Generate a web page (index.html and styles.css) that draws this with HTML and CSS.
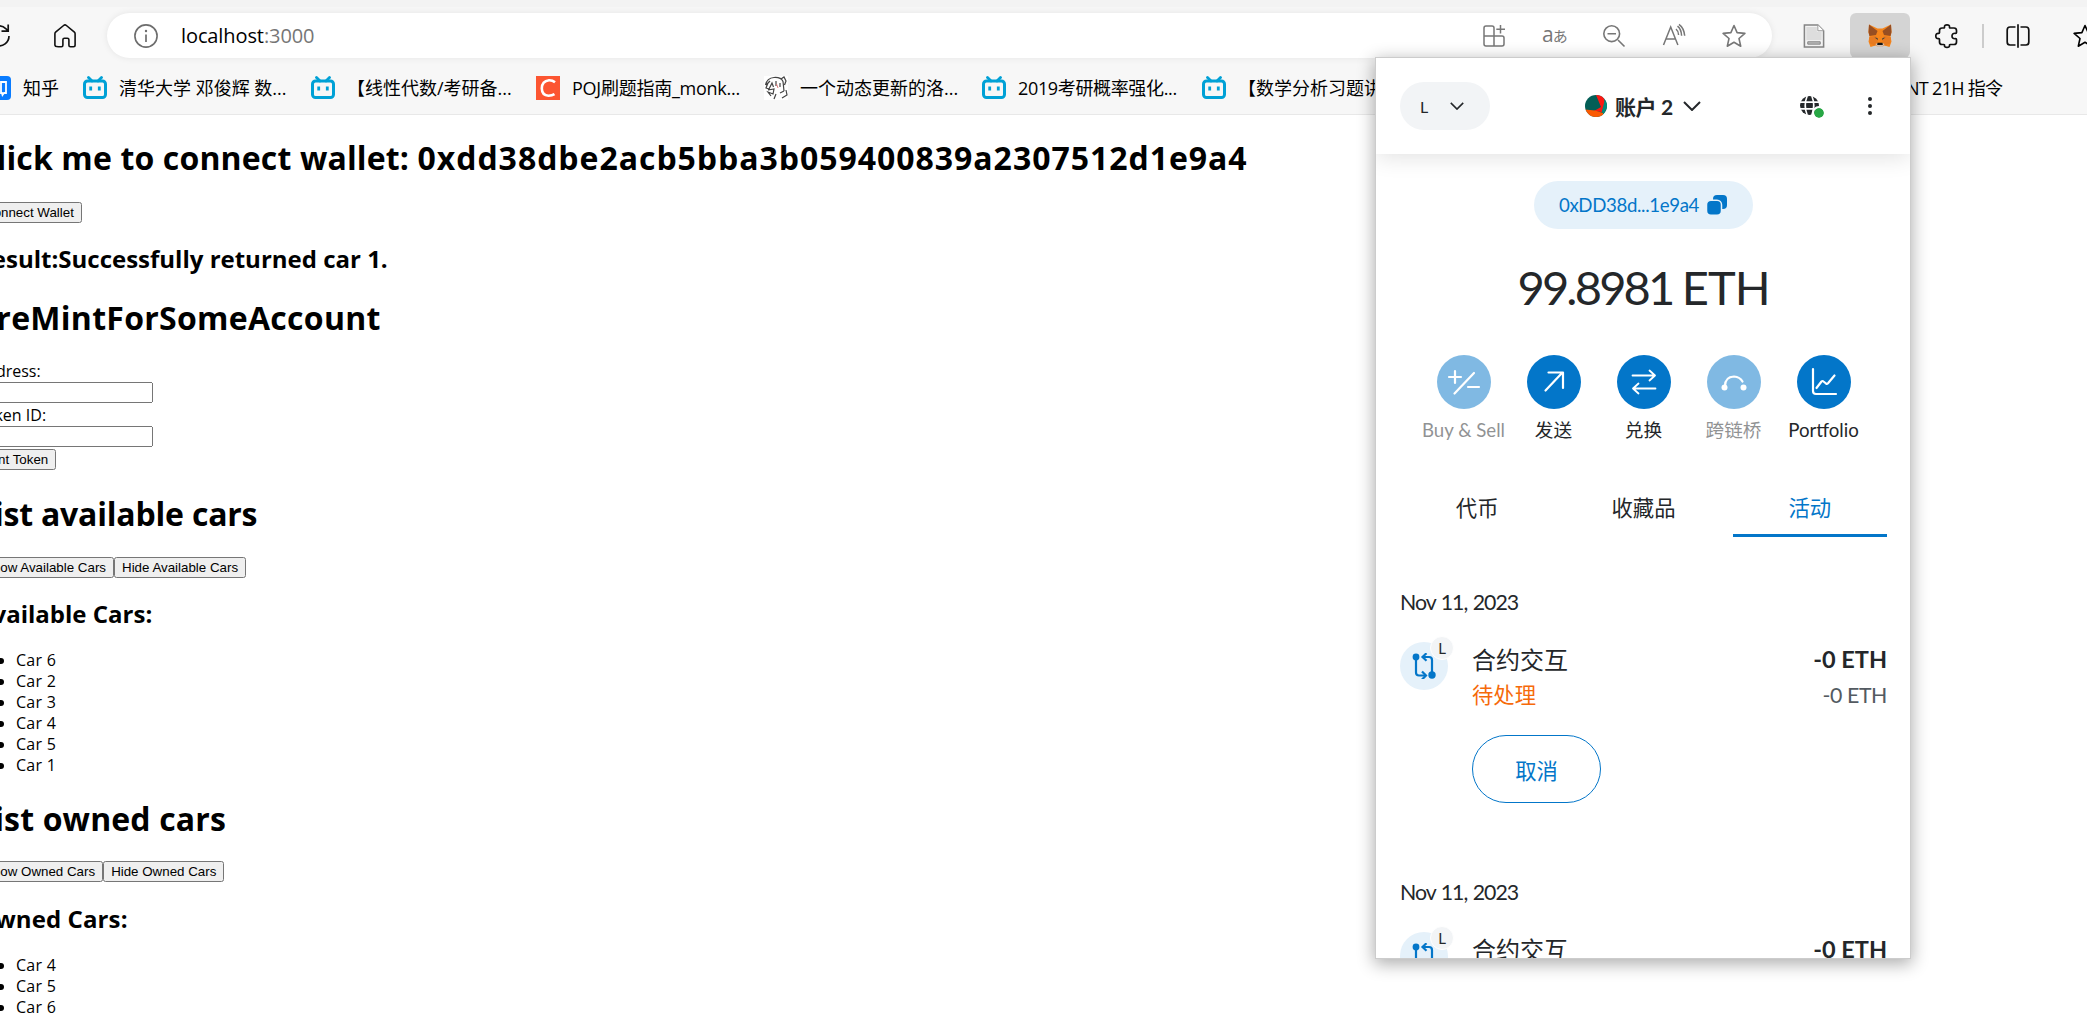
FILE: index.html
```html
<!DOCTYPE html>
<html lang="zh-CN">
<head>
<meta charset="utf-8">
<title>localhost:3000</title>
<link rel="stylesheet" href="styles.css">
</head>
<body>
<svg class="defs" aria-hidden="true">
  <symbol id="tv" viewBox="0 0 24 24"><path d="M5.500 1.500 9 5M18.500 1.500 15 5" stroke="#00a1d6" stroke-width="2.800" stroke-linecap="round"/><rect x="1.500" y="5" width="21" height="16.500" rx="3" fill="none" stroke="#00a1d6" stroke-width="3"/><path d="M7.700 10.500v4M16.300 10.500v4" stroke="#00a1d6" stroke-width="2.800"/></symbol>
  <symbol id="star" viewBox="0 0 24 24"><path d="m12 1.500 3.100 7.100 7.800.8-5.900 5.100 1.700 7.700L12 18.300l-6.700 3.900L7 14.500 1.100 9.400l7.800-.8Z" fill="none" stroke="currentColor" stroke-width="1.600" stroke-linejoin="round"/></symbol>
  <symbol id="chevron" viewBox="0 0 18 10"><path d="m1 1 8 8 8-8" fill="none" stroke="currentColor" stroke-width="2"/></symbol>
  <symbol id="swap-nodes" viewBox="0 0 24 26"><g fill="none" stroke="#0376c9" stroke-width="2.200"><path d="M4 4v15.500q0 3 3 3h6.500M20 22V7q0-3-3-3h-6"/><path d="m10 18.500 4 4-4 4M14.500.200l-4 3.800 4 3.800"/></g><circle cx="4" cy="4" r="3.400" fill="#0376c9"/><circle cx="20" cy="22" r="3.700" fill="#0376c9"/></symbol>
</svg>

<header class="browser">
  <div class="toolbar">
    <svg class="icon reload" viewBox="0 0 24 24"><path d="M22 12A10 10 0 1 1 19 4.800L21 7M21.200 .500V7.200H14.500" fill="none" stroke="#111" stroke-width="1.700"/></svg>
    <svg class="icon home" viewBox="0 0 24 24"><path d="M1.900 9.800q0-1 .7-1.600l8-6.700q1.400-1.200 2.800 0l8 6.700q.7.600.7 1.600V21q0 1.700-1.700 1.700h-3q-1.500 0-1.500-1.500v-5.500q0-1.500-1.500-1.500h-3q-1.500 0-1.500 1.500v5.500q0 1.500-1.500 1.500h-3Q1.900 22.700 1.900 21Z" fill="none" stroke="#111" stroke-width="1.600"/></svg>
    <div class="address-bar">
      <svg class="icon info" viewBox="0 0 24 24"><circle cx="12" cy="12" r="11.100" fill="none" stroke="#6d6d6d" stroke-width="1.600"/><path d="M12 10.500v7.500" stroke="#6d6d6d" stroke-width="1.700"/><circle cx="12" cy="7" r="1.200" fill="#6d6d6d"/></svg>
      <span class="url">localhost<span class="port">:3000</span></span>
      <div class="address-actions">
        <svg class="icon" viewBox="0 0 24 24"><path d="M12 12V4q0-2-2-2H4Q2 2 2 4v16q0 2 2 2h16q2 0 2-2v-6q0-2-2-2H2M12 12v10M18.500 1v8.500M14.300 5.200H23" fill="none" stroke="#777" stroke-width="1.500"/></svg>
        <span class="translate"><span>a</span><span class="kana">あ</span></span>
        <svg class="icon" viewBox="0 0 24 24"><path d="M16 16l6.500 6.500M5.500 9.700h8.500" stroke="#777" stroke-width="1.600"/><circle cx="9.700" cy="9.700" r="7.900" fill="none" stroke="#777" stroke-width="1.600"/></svg>
        <svg class="icon" viewBox="0 0 24 24"><path d="m1.500 21 7.200-18 7.200 18M4 15h9.300M14 5q2.500 2 2.600 6M15.500 2.200q3.800 3 4.100 9.500M17 .300q5 3.500 5.700 11.500" fill="none" stroke="#777" stroke-width="1.500"/></svg>
        <svg class="icon grey"><use href="#star"/></svg>
      </div>
    </div>
    <svg class="icon doc" viewBox="0 0 24 25"><path d="M2 1h14l6 6v17H2Z" fill="#f4f4f4" stroke="#858585" stroke-width="1.600"/><path d="M4 3h11v5h5v9H4Z" fill="#ddd"/><path d="M16 1v6h6" fill="#fff" stroke="#999"/><path d="M5.500 18.500h13v2.500h-13Z" fill="#bbb" stroke="#858585"/></svg>
    <div class="fox-tab">
      <svg class="fox" viewBox="0 0 24 24"><path d="M1 .5 9.500 4.500h5L23 .5l.5 8-1 4 1 5-2 5.500-5-1.500-3 1.500h-3l-3-1.500-5 1.500-2-5.500 1-5-1-4Z" fill="#f6851b"/><path d="M1 .5 9.500 7 8 11l-6.500 1L.500 8ZM23 .5 14.500 7 16 11l6.500 1 1-4Z" fill="#974e22"/><path d="m1 13.500 7-2 2 5-3 5-5-2ZM23 13.500l-7-2-2 5 3 5 5-2Z" fill="#e77b22"/><path d="m6.500 13.500 3 .5.500 2ZM17.500 13.500l-3 .5-.5 2Z" fill="#3d3d3d"/><path d="m7.500 20 2.500-1h4l2.500 1-2 3h-5Z" fill="#d7c1b3"/><path d="M9.500 18.800h5l.3 2.200H9.200Z" fill="#161616"/></svg>
    </div>
    <svg class="icon puzzle" viewBox="0 0 24 24"><path d="M7 4h1.700q1 0 .8-1Q9.300.900 12 .9T14.500 3q-.2 1 .8 1h3.700Q21.500 4 21.500 6.500v2q0 .8-1 .8-3.500-.3-3.500 2.700t3.500 2.700q1 0 1 .8v2.500Q21.500 20.500 19 20.500h-3.700q-1 0-.8 1 .2 1.900-2.500 1.900t-2.500-1.900q.2-1-.8-1H7Q4.500 20.500 4.500 18v-2.500q0-.8-.800-.8-2.900.200-2.900-2.700t2.900-2.700q.8 0 .8-.8v-2Q4.500 4 7 4Z" fill="none" stroke="#111" stroke-width="1.700"/></svg>
    <i class="divider"></i>
    <svg class="icon split" viewBox="0 0 24 24"><path d="M9.500 3H4Q1.200 3 1.200 6v12q0 3 2.800 3h5.500M14.500 3H20q2.800 0 2.800 3v12q0 3-2.800 3h-5.500M12 .3v23.400" fill="none" stroke="#111" stroke-width="1.700"/></svg>
    <svg class="icon favorites"><use href="#star"/></svg>
  </div>
  <nav class="bookmarks">
    <a class="bm b0"><svg viewBox="0 0 24 24"><rect width="24" height="24" rx="4" fill="#0a7cff"/><path d="M14 6h5v11h-2l-1.500 2-.5-2h-1ZM3 7h7M2 12h9M6.500 7q0 8-4 11" fill="none" stroke="#fff" stroke-width="1.800"/></svg><span>知乎</span></a>
    <a class="bm b1"><svg><use href="#tv"/></svg><span>清华大学 邓俊辉 数...</span></a>
    <a class="bm b2"><svg><use href="#tv"/></svg><span>【线性代数/考研备...</span></a>
    <a class="bm b3"><svg viewBox="0 0 24 24"><path d="M0 0h24v24H0Z" fill="#fc5531"/><path d="M19 6.200Q16.500 4.200 13 4.300 6 5 5.800 12.500q.2 7 6.700 7.200 3.500 0 6-1.500" fill="none" stroke="#fff" stroke-width="2.600"/></svg><span>POJ刷题指南_monk...</span></a>
    <a class="bm b4"><svg viewBox="0 0 24 24"><path d="M0 0h24v24H0Z" fill="#fff"/><path d="M1.500 9Q3 2 10 1.500q7-.5 9 4L20 15M17 3l3-2 2 4-1.500 4M4 7l-2 5 3 1 3-6 1.500 4M12 5v5M16 7v4M4 14l6-1-1 5-5-2 3 4M12 18l-2 5M22 14l1 5-5 3M16 17l4-2M2 9l4-4" fill="none" stroke="#444" stroke-width="1.200"/><path d="m12.500 8 1.500 4" stroke="#d77"/></svg><span>一个动态更新的洛...</span></a>
    <a class="bm b5"><svg><use href="#tv"/></svg><span>2019考研概率强化...</span></a>
    <a class="bm b6"><svg><use href="#tv"/></svg><span>【数学分析习题讲</span></a>
    <a class="bm b7"><span>NT 21H 指令</span></a>
  </nav>
</header>

<main class="page">
  <h1>Click me to connect wallet: <span class="hex">0xdd38dbe2acb5bba3b059400839a2307512d1e9a4</span></h1>
  <div class="row"><button>Connect Wallet</button></div>
  <h2>Result:Successfully returned car 1.</h2>
  <h1 class="premint">PreMintForSomeAccount</h1>
  <form class="mint">
    <label>Address:</label>
    <input type="text">
    <label>Token ID:</label>
    <input type="text">
    <button type="button">Mint Token</button>
  </form>
  <h1 class="available">List available cars</h1>
  <div class="row avail-row"><button>Show Available Cars</button><button>Hide Available Cars</button></div>
  <h2>Available Cars:</h2>
  <ul>
    <li>Car 6</li><li>Car 2</li><li>Car 3</li><li>Car 4</li><li>Car 5</li><li>Car 1</li>
  </ul>
  <h1>List owned cars</h1>
  <div class="row owned-row"><button>Show Owned Cars</button><button>Hide Owned Cars</button></div>
  <h2 class="owned">Owned Cars:</h2>
  <ul>
    <li>Car 4</li><li>Car 5</li><li>Car 6</li>
  </ul>
</main>

<section class="wallet">
  <div class="wallet-head">
    <div class="network">L<svg><use href="#chevron"/></svg></div>
    <div class="account">
      <svg class="avatar" viewBox="0 0 22 22"><clipPath id="disc"><circle cx="11" cy="11" r="11"/></clipPath><g clip-path="url(#disc)"><path d="M0 0h22v22H0Z" fill="#035e56"/><path d="M11 0h7l2 8-3 9-8-1 7-4Z" fill="#fb1812"/><path d="m20 4 3 7-5 9-1-4Z" fill="#028a7d"/><path d="m0 14.500 10 1 8 2.500v5H0Z" fill="#fb5a02"/></g></svg>
      <b>账户 2</b>
      <svg class="chev"><use href="#chevron"/></svg>
    </div>
    <div class="site">
      <svg class="globe" viewBox="0 0 20 20"><circle cx="10" cy="10" r="10" fill="#24272a"/><path d="M0 6.500h20M0 13.500h20M7.500 0q-4 10 0 20M12.500 0q4 10 0 20" fill="none" stroke="#fff" stroke-width="1.700"/></svg>
      <i class="online"></i>
    </div>
    <svg class="kebab" viewBox="0 0 4 18"><circle cx="2" cy="2" r="2"/><circle cx="2" cy="9" r="2"/><circle cx="2" cy="16" r="2"/></svg>
  </div>
  <div class="wallet-body">
    <div class="address"><span>0xDD38d...1e9a4</span>
      <svg viewBox="0 0 20 20"><rect x="6" width="14" height="14" rx="4" fill="#0376c9"/><rect x="-.5" y="5.300" width="15" height="15" rx="4.500" fill="#0376c9" stroke="#e5f1fa" stroke-width="1.500"/></svg>
    </div>
    <div class="balance"><span class="number">99.8981 </span><span class="unit">ETH</span></div>
    <div class="actions">
      <div class="action off"><i><svg viewBox="0 0 32 32"><path d="M7 5v12M1 11h12M6.500 27.500 26 7M20 21h11" /></svg></i><span>Buy &amp; Sell</span></div>
      <div class="action"><i><svg viewBox="0 0 32 32"><path d="M7.500 24.500 24 7M10.500 6.500H25V22"/></svg></i><span>发送</span></div>
      <div class="action"><i><svg viewBox="0 0 32 32"><path d="M4.500 9.500H27M21.500 4.500 27 9.500l-5.500 5M27.500 22.500H5M10.500 17.500 5 22.500l5.500 5" stroke-width="1.800"/></svg></i><span>兑换</span></div>
      <div class="action off"><i><svg viewBox="0 0 32 32"><path d="M7 20q0-9 9-9.500 6 .5 8.500 5"/><circle cx="6.500" cy="21.500" r="3"/><circle cx="25.500" cy="21.500" r="3"/></svg></i><span>跨链桥</span></div>
      <div class="action"><i><svg viewBox="0 0 32 32"><path d="M5 3v22q0 3 3 3h20M8.500 22l5-6.500q1-1 2 0l2.500 2q1 .7 2-.3L26.500 9.500"/></svg></i><span>Portfolio</span></div>
    </div>
    <div class="tabs"><span>代币</span><span>收藏品</span><span class="on">活动</span></div>
    <div class="tx">
      <div class="date">Nov 11, 2023</div>
      <div class="entry">
        <div class="tx-icon"><svg><use href="#swap-nodes"/></svg><span class="badge">L</span></div>
        <div class="what"><div class="title">合约交互</div><div class="status">待处理</div></div>
        <div class="amounts"><b>-0 ETH</b><span>-0 ETH</span></div>
      </div>
      <button class="cancel">取消</button>
    </div>
    <div class="tx">
      <div class="date">Nov 11, 2023</div>
      <div class="entry">
        <div class="tx-icon"><svg><use href="#swap-nodes"/></svg><span class="badge">L</span></div>
        <div class="what"><div class="title">合约交互</div></div>
        <div class="amounts"><b>-0 ETH</b></div>
      </div>
    </div>
  </div>
</section>
</body>
</html>
```
FILE: styles.css
```css
* { box-sizing: border-box; }
body {
  margin: 0;
  position: relative;
  width: 2087px;
  height: 1023px;
  overflow: hidden;
  background: #fff;
  color: #000;
  font-family: "Open Sans", "Noto Sans CJK SC", sans-serif;
  font-size: 16px;
}
svg { display: block; flex: none; overflow: visible; }
.defs { position: absolute; width: 0; height: 0; }

/* Browser chrome */
.browser {
  height: 115px;
  background: #f7f7f7;
  border-top: 7px solid #f3f3f3;
  border-bottom: 1px solid #e8e8e8;
}
.toolbar { display: flex; align-items: center; height: 57px; }
.icon { width: 24px; height: 24px; }
.reload { margin-left: -13px; }
.home { margin-left: 42px; }
.address-bar {
  display: flex;
  flex: none;
  align-items: center;
  width: 1665px;
  height: 45px;
  margin-left: 30px;
  border-radius: 23px;
  background: #fff;
  box-shadow: 0 0 7px rgba(0,0,0,.08);
}
.info { margin-left: 27px; }
.url { margin-left: 23px; width: 200px; font-size: 20px; letter-spacing: -.1px; }
.port { color: #767676; }
.address-actions { display: flex; align-items: center; margin-left: 1101px; gap: 36px; }
.translate { display: flex; align-items: baseline; width: 24px; height: 24px; color: #777; white-space: nowrap; font-size: 21px; line-height: 20px; }
.kana { font-size: 15px; margin-left: -1px; font-family: "Noto Sans CJK JP", sans-serif; }
.grey { color: #777; }
.doc { margin-left: 30px; }
.fox-tab { display: grid; flex: none; place-items: center; width: 60px; height: 45px; margin-left: 24px; border-radius: 6px; background: #d4d4d4; }
.fox { width: 24px; height: 24px; }
.puzzle { margin-left: 25px; }
.divider { flex: none; width: 2px; height: 24px; margin-left: 23px; background: #ccc; }
.split { margin-left: 22px; }
.favorites { margin-left: 43px; }
.bookmarks { display: flex; align-items: center; height: 48px; font-size: 18px; white-space: nowrap; }
.bm { display: flex; align-items: center; flex: none; }
.bm svg { width: 24px; height: 24px; margin-right: 12px; }
.bm span { margin-top: -3px; }
.b0 { margin-left: -13px; width: 96px; }
.b1 { width: 228px; }
.b2 { width: 225px; }
.b3 { width: 228px; letter-spacing: -.25px; }
.b4 { width: 218px; }
.b5 { width: 220px; letter-spacing: -.35px; }
.b6 { width: 704px; }
.b7 { letter-spacing: -.7px; }

/* dApp page */
.page { margin-left: -24px; padding-top: 21px; line-height: 21px; }
h1, h2 { margin: 0; white-space: nowrap; }
h1 { height: 43px; font-size: 32px; line-height: 43px; letter-spacing: .14px; }
h2 { height: 32px; margin-top: 20px; font-size: 24px; line-height: 32px; }
.hex { letter-spacing: .96px; }
.premint { letter-spacing: .28px; }
.available { letter-spacing: -.2px; }
.owned { letter-spacing: .1px; }
.row { display: flex; margin-top: 23px; }
.page button { height: 21px; padding: 1px 6px; font: 13.333px "Liberation Sans", Arial, sans-serif; }
.page h2 + h1 { margin-top: 21px; }
.mint { display: flex; flex-direction: column; align-items: flex-start; margin-top: 22px; height: 110px; }
.mint label { height: 21px; }
.mint input { width: 177px; height: 21px; margin-bottom: 2px; padding: 1px 2px; }
.mint + h1 { margin-top: 21px; }
.page .avail-row { margin-top: 22px; }
.page .owned-row { margin-top: 21px; }
.page .owned { margin-top: 21px; }
.page ul { margin: 20px 0 0; padding-left: 40px; }
.page li { height: 21px; letter-spacing: .25px; }
.page ul + h1 { margin-top: 21px; }

/* Wallet popup */
.wallet {
  position: absolute;
  left: 1376px;
  top: 58px;
  width: 534px;
  height: 900px;
  overflow: hidden;
  background: #fff;
  color: #24272a;
  font-family: Lato, "Noto Sans CJK SC", sans-serif;
  box-shadow: 0 0 0 1px #ccc, 0 4px 16px 2px rgba(0,0,0,.32);
}
.wallet-head {
  display: flex;
  align-items: center;
  height: 96px;
  padding: 0 24px;
  box-shadow: 0 3px 22px rgba(0,0,0,.12);
}
.network { display: flex; align-items: center; justify-content: space-between; width: 90px; height: 48px; padding: 0 26px 0 20px; border-radius: 24px; background: #f2f4f6; font-size: 16px; }
.network svg { width: 14px; height: 8px; }
.account { display: flex; align-items: center; margin-left: 95px; width: 215px; font-size: 21px; letter-spacing: -.4px; }
.avatar { width: 22px; height: 22px; margin-right: 8px; }
.chev { width: 18px; height: 10px; margin-left: 10px; }
.site { position: relative; width: 24px; height: 24px; }
.globe { width: 19px; height: 19px; margin-top: 2px; }
.online { position: absolute; right: 0; bottom: 0; width: 10px; height: 10px; border-radius: 50%; background: #28a745; outline: 2px solid #fff; }
.kebab { width: 4px; height: 18px; margin-left: 44px; fill: #24272a; }
.wallet-body { display: flex; flex-direction: column; padding: 0 23px 0 24px; }
.address { display: flex; align-items: center; align-self: center; width: 219px; height: 48px; margin-top: 27px; padding-left: 25px; border-radius: 24px; background: #e5f1fa; color: #0376c9; font-size: 18.667px; letter-spacing: -.35px; }
.address svg { width: 20px; height: 20px; margin-left: auto; margin-right: 26px; }
.balance { height: 64px; margin-top: 26px; text-align: center; font-size: 47px; line-height: 64px; white-space: pre; }
.number { letter-spacing: -2.800px; }
.unit { letter-spacing: -1px; }
.actions { display: flex; justify-content: center; margin-top: 36px; }
.action { display: flex; flex-direction: column; align-items: center; width: 90px; font-size: 18.667px; white-space: nowrap; }
.action i { display: grid; place-items: center; width: 54px; height: 54px; margin-bottom: 7px; border-radius: 50%; background: #0376c9; }
.action svg { width: 32px; height: 32px; fill: none; stroke: #fff; stroke-width: 2.200; stroke-linecap: round; stroke-linejoin: round; }
.action circle { fill: #fff; stroke: none; }
.action span { height: 29px; line-height: 29px; }
.off { opacity: .5; }
.tabs { display: flex; gap: 12px; height: 62px; margin-top: 30px; font-size: 21.333px; text-align: center; }
.tabs span { flex: 1; line-height: 67px; border-bottom: 3px solid transparent; }
.tabs .on { color: #0376c9; border-color: #0376c9; }
.tx { height: 290px; padding-top: 49px; font-size: 21.333px; }
.date { height: 32px; line-height: 32px; letter-spacing: -1px; word-spacing: 1px; }
.entry { display: flex; margin-top: 24px; }
.tx-icon { position: relative; display: grid; place-items: center; width: 48px; height: 48px; border-radius: 50%; background: #e5f1fa; }
.tx-icon svg { width: 24px; height: 26px; }
.badge { position: absolute; right: -6px; top: -6px; width: 24px; height: 24px; border: 1px solid #fff; border-radius: 50%; background: #f2f4f6; font-size: 15px; line-height: 22px; text-align: center; }
.what { margin-left: 24px; }
.title { height: 36px; font-size: 24px; line-height: 35px; }
.status { height: 36px; line-height: 35px; color: #f66a0a; }
.amounts { display: flex; flex-direction: column; align-items: flex-end; margin-left: auto; line-height: 35px; }
.amounts b { height: 36px; font-size: 23.500px; line-height: 34px; }
.amounts span { color: #535a61; letter-spacing: -.4px; }
.cancel { display: block; width: 129px; height: 68px; margin: 21px 0 0 72px; border: 1px solid #0376c9; border-radius: 34px; background: #fff; color: #0376c9; font: inherit; }
```
